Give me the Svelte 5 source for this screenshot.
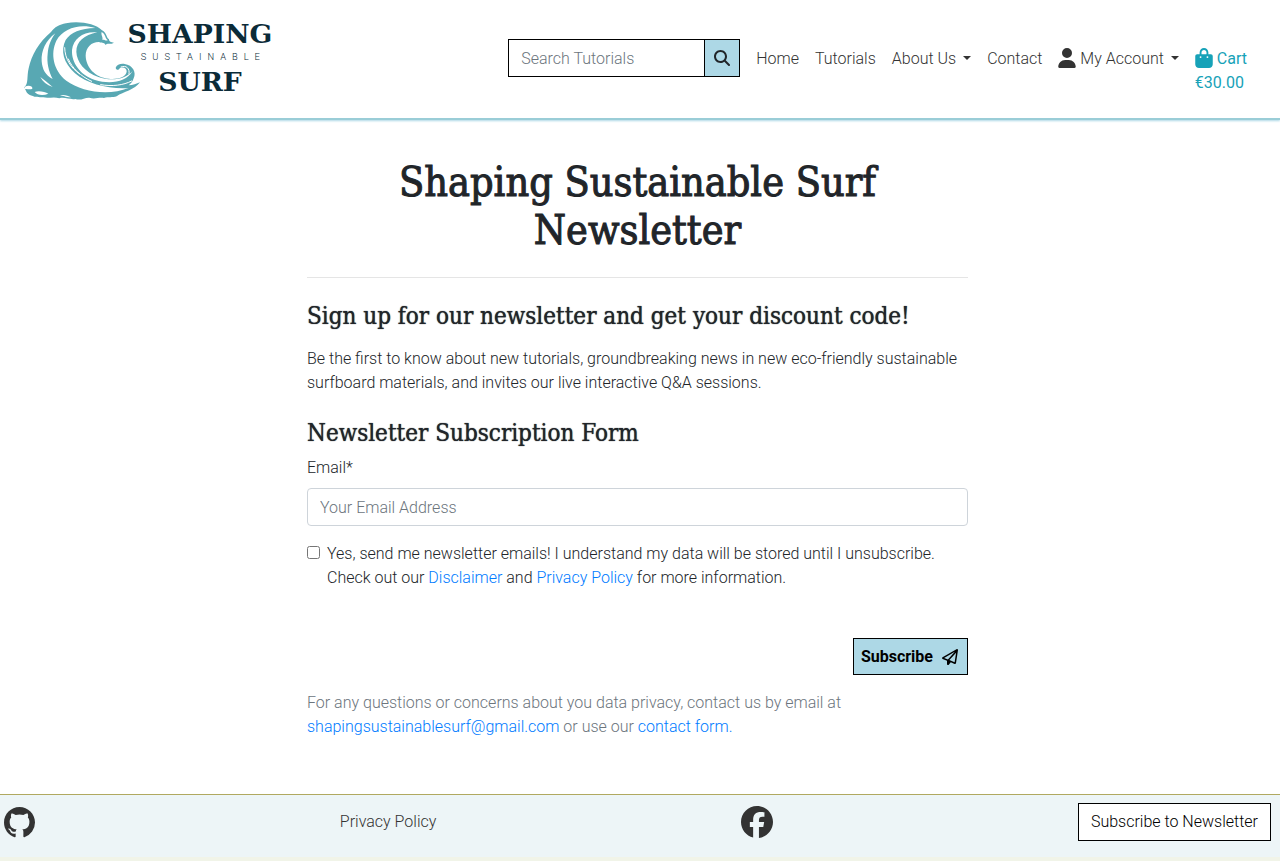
<script lang="ts">
  let search = $state('');
  let email = $state('');
  let consent = $state(false);
</script>

<div class="page">
  <header>
    <a class="logo" href="/" aria-label="Shaping Sustainable Surf">
      <svg viewBox="0 0 900 330" width="300" height="110">
        <path fill="#58a8b3" d="M73 262C86 252 80 230 86 205C94 166 117 126 153 96C164 81 178 74 198 70C238 62 286 71 306 91C321 99 318 112 327 118C326 124 334 128 342 128C330 135 323 127 317 135C312 124 302 132 298 126C276 125 257 141 257 167C258 202 285 232 326 236C351 239 377 232 380 215C381 203 367 198 357 207C354 213 347 207 347 203C350 194 362 190 374 192C398 195 410 217 401 235C397 246 392 252 386 256C398 256 410 251 420 247C404 270 370 275 350 289C337 294 325 289 312 294C297 290 286 299 268 293C254 292 242 303 226 297C210 300 194 290 178 295C162 289 145 296 130 292C115 290 107 293 96 287C86 285 80 280 77 271Z" />
        <g fill="#fff">
          <path d="M166 100C137 121 123 153 125 184C127 208 136 226 158 237C145 211 140 188 143 161C145 139 151 121 166 100Z" />
          <path d="M286 84C240 70 190 84 169 122C151 160 159 210 199 242C245 276 325 288 386 264C330 268 262 253 225 220C190 188 181 152 197 120C211 98 242 85 286 84Z" />
          <path d="M292 97C250 93 220 115 216 150C214 188 240 225 285 240C330 254 378 247 398 213C376 238 335 245 295 231C254 216 230 186 229 155C229 125 252 105 292 97Z" />
          <path d="M75 260C86 254 99 259 97 266C90 271 79 265 73 268ZM104 276C116 271 136 276 145 281C130 287 112 286 104 276ZM121 231C133 240 146 250 158 261C140 255 128 245 121 231ZM180 286C190 283 205 286 213 292C196 292 189 287 180 286Z" />
          <path d="M305 96C318 103 314 115 324 121C316 123 312 117 307 120C310 112 302 105 305 96Z" />
        </g>
        <g fill="none" stroke="#fff" stroke-linecap="round" stroke-width="3">
          <path d="M194 143C195 178 213 204 239 222M205 177C216 204 241 228 275 244M238 203C252 216 265 223 279 228M302 254C336 260 370 256 395 243M363 201C379 194 390 206 387 222" />
        </g>
        <g fill="#0b2b38" text-anchor="middle">
          <text class="brand" x="600" y="128">SHAPING</text>
          <text class="brand" x="600" y="273">SURF</text>
          <text class="brand-small" x="610" y="179">SUSTAINABLE</text>
        </g>
      </svg>
    </a>

    <nav aria-label="Main">
      <form class="search" role="search" onsubmit={(e) => e.preventDefault()}>
        <input type="search" aria-label="Search Tutorials" placeholder="Search Tutorials" bind:value={search} />
        <button type="submit" aria-label="Search">
          <svg viewBox="0 0 512 512" width="16" height="16" fill="currentColor"><path d="M416 208c0 45.900-14.900 88.300-40 122.700L502.600 457.400c12.500 12.500 12.500 32.800 0 45.300s-32.800 12.500-45.300 0L330.700 376c-34.400 25.200-76.800 40-122.700 40C93.100 416 0 322.900 0 208S93.100 0 208 0S416 93.100 416 208zM208 352a144 144 0 1 0 0-288 144 144 0 1 0 0 288z" /></svg>
        </button>
      </form>
      <a href="/">Home</a>
      <a href="/tutorials">Tutorials</a>
      <a class="drop" href="/about">About Us</a>
      <a href="/contact">Contact</a>
      <a class="drop" href="/account">
        <svg viewBox="0 0 448 512" width="18" height="20" fill="currentColor"><path d="M224 256A128 128 0 1 0 224 0a128 128 0 1 0 0 256zm-45.700 48C79.800 304 0 383.800 0 482.300C0 498.700 13.300 512 29.700 512l388.600 0c16.400 0 29.700-13.300 29.700-29.700C448 383.800 368.200 304 269.700 304l-91.400 0z" /></svg>
        My Account</a>
      <a class="cart" href="/cart">
        <span><svg viewBox="0 0 448 512" width="18" height="20" fill="currentColor"><path d="M160 112c0-35.300 28.700-64 64-64s64 28.700 64 64v48H160V112zm-48 48H48c-26.500 0-48 21.500-48 48V416c0 53 43 96 96 96H352c53 0 96-43 96-96V208c0-26.500-21.500-48-48-48H336V112C336 50.100 285.900 0 224 0S112 50.100 112 112v48zm24 48a24 24 0 1 1 0 48 24 24 0 1 1 0-48zm152 24a24 24 0 1 1 48 0 24 24 0 1 1 -48 0z" /></svg>
        Cart</span>
        <span class="total">€30.00</span>
      </a>
    </nav>
  </header>

  <main>
    <div class="content">
      <h1>Shaping Sustainable Surf Newsletter</h1>
      <hr />
      <h2>Sign up for our newsletter and get your discount code!</h2>
      <p class="intro">Be the first to know about new tutorials, groundbreaking news in new eco-friendly sustainable surfboard materials, and invites our live interactive Q&amp;A sessions.</p>

      <form onsubmit={(e) => e.preventDefault()}>
        <h2>Newsletter Subscription Form</h2>
        <label class="field-label" for="email">Email*</label>
        <input class="email" id="email" type="email" placeholder="Your Email Address" required bind:value={email} />
        <div class="consent">
          <input id="consent" type="checkbox" required bind:checked={consent} />
          <div>
            <label for="consent">Yes, send me newsletter emails! I understand my data will be stored until I unsubscribe.</label>
            <div>Check out our <a href="/disclaimer">Disclaimer</a> and <a href="/privacy">Privacy Policy</a> for more information.</div>
          </div>
        </div>
        <div class="actions">
          <button class="subscribe" type="submit">Subscribe
            <svg viewBox="0 0 512 512" width="16" height="16" fill="currentColor"><path d="M16.100 260.200c-22.600 12.900-20.500 47.300 3.600 57.300L160 376V479.300c0 18.100 14.600 32.700 32.700 32.700c9.700 0 18.900-4.300 25.100-11.800l62-74.300 123.900 51.600c18.900 7.900 40.800-4.500 43.900-24.700l64-416c1.900-12.100-3.400-24.300-13.500-31.200s-23.300-7.500-34-1.400l-448 256zm52.100 25.500L409.700 90.600 190.100 336l1.200 1L68.200 285.700zM403.300 425.400L236.700 355.900 450.800 116.600 403.300 425.400z" /></svg>
          </button>
        </div>
      </form>
      <p class="note">For any questions or concerns about you data privacy, contact us by email at <a href="mailto:shapingsustainablesurf@gmail.com">shapingsustainablesurf@gmail.com</a> or use our <a href="/contact">contact form.</a></p>
    </div>
  </main>

  <footer>
    <a href="https://github.com" aria-label="GitHub"><svg viewBox="0 0 16 16" width="31" height="31" fill="currentColor"><path d="M8 0C3.580 0 0 3.580 0 8c0 3.540 2.290 6.530 5.470 7.590.4.070.55-.17.55-.38 0-.19-.01-.82-.01-1.490-2.010.37-2.530-.49-2.690-.94-.09-.23-.48-.94-.82-1.130-.28-.15-.68-.52-.01-.53.630-.01 1.080.58 1.230.82.720 1.210 1.870.87 2.330.66.070-.52.280-.87.510-1.070-1.780-.2-3.640-.89-3.640-3.950 0-.87.310-1.590.82-2.150-.08-.2-.36-1.020.08-2.120 0 0 .67-.21 2.200.82.640-.18 1.320-.27 2-.27s1.360.09 2 .27c1.530-1.040 2.200-.82 2.200-.82.440 1.100.16 1.920.08 2.120.510.56.82 1.270.82 2.150 0 3.070-1.870 3.750-3.650 3.950.290.25.540.73.540 1.480 0 1.070-.01 1.930-.01 2.200 0 .21.150.46.550.38A8.010 8.010 0 0 0 16 8c0-4.420-3.580-8-8-8z" /></svg></a>
    <a href="/privacy">Privacy Policy</a>
    <a href="https://facebook.com" aria-label="Facebook"><svg viewBox="0 0 512 512" width="32" height="32" fill="currentColor"><path d="M512 256C512 114.600 397.400 0 256 0S0 114.600 0 256C0 376 82.700 476.800 194.200 504.500V334.200H141.400V256h52.800V222.300c0-87.100 39.400-127.500 125-127.500c16.200 0 44.200 3.200 55.700 6.400V172c-6-.6-16.500-1-29.600-1c-42 0-58.200 15.900-58.200 57.200V256h83.600l-14.400 78.200H287V510.100C413.800 494.800 512 386.900 512 256h0z" /></svg></a>
    <a class="newsletter" href="/newsletter">Subscribe to Newsletter</a>
  </footer>
</div>

<style>
  :global(body) { background: #fff; }
  .page, .page * { box-sizing: border-box; }
  .page {
    min-height: 100vh;
    display: flex;
    flex-direction: column;
    font: 300 16px/24px Roboto, sans-serif;
    color: #212529;
  }
  a { color: #007bff; text-decoration: none; }
  svg { display: block; }
  input, button { font: inherit; }
  input::placeholder { color: #6c757d; opacity: 1; }

  header {
    display: flex;
    justify-content: space-between;
    align-items: flex-start;
    min-height: 120px;
    padding-right: 33px;
    border-bottom: 2px solid #9acdd7;
    box-shadow: 0 1px 2px #add8e6;
  }
  .brand { font: 700 80px "Roboto Slab", "DejaVu Serif", serif; }
  .brand-small { font: 300 28px Roboto, sans-serif; letter-spacing: 18px; }

  nav { display: flex; align-items: flex-start; gap: 16px; padding-top: 39px; }
  nav a { color: #333; padding-top: 8px; white-space: nowrap; }
  nav a svg { display: inline-block; vertical-align: -4px; }
  .drop::after {
    content: "";
    display: inline-block;
    margin-left: 7px;
    vertical-align: 4px;
    border-top: 4px solid;
    border-right: 4px solid transparent;
    border-left: 4px solid transparent;
  }
  .cart { display: flex; flex-direction: column; color: #17a2b8; font-weight: 400; }
  .search { display: flex; height: 38px; border: 1px solid #000; }
  .search input { width: 195px; padding: 1px 12px 0; border: 0; background: #fff; appearance: none; }
  .search button {
    width: 35px;
    display: grid;
    place-items: center;
    padding: 0;
    border: 0;
    border-left: 1px solid #000;
    background: #add8e6;
    color: #212529;
  }

  main { flex: 1; padding: 38px 5px 0 0; }
  .content { max-width: 661px; margin: 0 auto; }
  h1, h2 { margin: 0; font-family: "Roboto Slab", "DejaVu Serif Condensed", "DejaVu Serif", serif; font-weight: 500; }
  h1 { font-size: 41px; line-height: 48px; text-align: center; -webkit-text-stroke: 1px currentColor; }
  h2 { font-size: 24px; line-height: 29px; text-shadow: 0 0 1px currentColor; }
  hr { margin: 23px 0 24px; border: 0; border-top: 1px solid #e5e5e5; }
  .intro { margin: 16px 0 24px; }
  .field-label { display: block; margin: 8px 0; }
  .email {
    display: block;
    width: 100%;
    height: 38px;
    padding: 0 12px;
    border: 1px solid #ced4da;
    border-radius: 4px;
    background: #fff;
  }
  .consent { display: flex; align-items: flex-start; gap: 7px; margin-top: 16px; }
  .consent input { width: 13px; height: 13px; margin: 4px 0 0; flex: none; }
  .actions { display: flex; justify-content: flex-end; margin-top: 48px; }
  .subscribe {
    display: flex;
    align-items: center;
    gap: 9px;
    height: 37px;
    padding: 0 9px 0 7px;
    border: 1px solid #000;
    background: #add8e6;
    color: #000;
    font-weight: 700;
  }
  .note { margin: 16px 0 0; color: #6c757d; }

  footer {
    display: flex;
    justify-content: space-between;
    align-items: center;
    padding: 8px 9px 16px 4px;
    border-top: 1px solid #b0a960;
    border-bottom: 4px solid #f1f4e8;
    background: #edf5f7;
  }
  footer a { color: #333; }
  .newsletter { padding: 6px 12px; border: 1px solid #000; background: #fff; color: #000; }
</style>
